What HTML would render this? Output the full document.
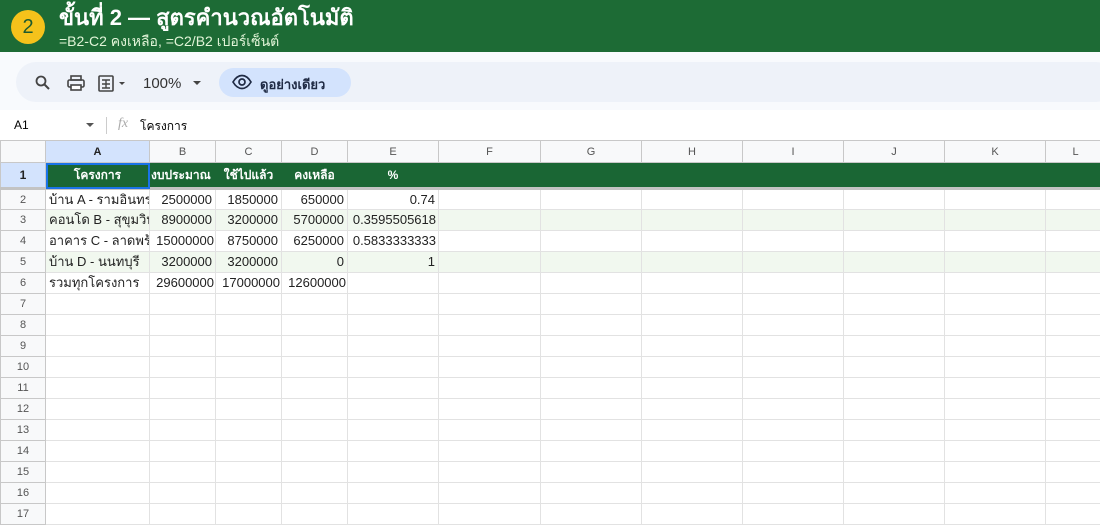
<!DOCTYPE html>
<html><head><meta charset="utf-8"><style>
*{margin:0;padding:0;box-sizing:border-box}
body{width:1100px;height:522px;overflow:hidden;background:#fff;font-family:"Liberation Sans","Noto Sans CJK SC",sans-serif;position:relative}
.ban{position:absolute;left:0;top:0;width:1100px;height:52px;background:#1d6b35}
.badge{position:absolute;left:11px;top:10px;width:34px;height:34px;border-radius:50%;background:#f5c21b;color:#1d5a2e;font-size:20px;text-align:center;line-height:34px}
.t1{position:absolute;left:59px;top:5px;color:#fff;font-size:22px;line-height:26px;font-weight:bold;white-space:nowrap}
.t2{position:absolute;left:59px;top:33px;color:#e2f5d8;font-size:14px;white-space:nowrap;line-height:16px}
.tb{position:absolute;left:0;top:52px;width:1100px;height:58px;background:#f8fafd}
.pill{position:absolute;left:16px;top:62px;width:1100px;height:40px;border-radius:20px;background:#eef2f9}
.fb{position:absolute;left:0;top:110px;width:1100px;height:30px;background:#fff;font-size:12px}
table{position:absolute;left:0;top:140px;border-collapse:collapse;table-layout:fixed;width:1105px}
td{border:1px solid #e2e2e2;height:21px;font-size:13px;padding:0 3px;white-space:nowrap;overflow:hidden;color:#222;line-height:18px}
td.h{background:#f8f9fa;color:#555;font-size:11px;text-align:center;border-color:#c8c8c8;padding:0}
tr.ch td{height:22px}
tr.r1 td{background:#1a6634;color:#fff;font-weight:bold;text-align:center;font-size:12px;height:26px;border-color:#1a6634;border-bottom:3px solid #c3c3c3}
tr.r1 td.h{background:#d3e3fd;color:#222;border-color:#c8c8c8;border-bottom:3px solid #c3c3c3;font-weight:bold}
tr.s td{background:#f1f8ef}
tr.s td.h{background:#f8f9fa}
.n{text-align:right}
</style></head><body>
<div class="ban"><div class="badge">2</div>
<div class="t1">ขั้นที่ 2 — สูตรคำนวณอัตโนมัติ</div>
<div class="t2">=B2-C2 คงเหลือ, =C2/B2 เปอร์เซ็นต์</div></div>
<div class="tb"></div><div class="pill"></div>
<svg style="position:absolute;left:35px;top:75px" width="16" height="16" viewBox="0 0 16 16"><circle cx="6" cy="6" r="4.5" fill="none" stroke="#444" stroke-width="1.8"/><path d="M9.5 9.5L14 14" stroke="#444" stroke-width="2"/></svg>
<svg style="position:absolute;left:67px;top:75px" width="18" height="16" viewBox="0 0 18 16"><rect x="4" y="1" width="10" height="4" fill="none" stroke="#444" stroke-width="1.6"/><rect x="1" y="5" width="16" height="7" rx="1.5" fill="none" stroke="#444" stroke-width="1.6"/><rect x="4" y="10" width="10" height="5" fill="#fff" stroke="#444" stroke-width="1.6"/></svg>
<svg style="position:absolute;left:98px;top:74px" width="32" height="18" viewBox="0 0 32 18"><rect x="1" y="2" width="14" height="15" rx="1" fill="none" stroke="#444" stroke-width="1.6"/><path d="M4 6h8M4 10h8M4 14h8M8 6v8" stroke="#444" stroke-width="1.4"/><path d="M21 8l3 3 3-3z" fill="#444"/></svg>
<div style="position:absolute;left:143px;top:75px;font-size:15px;color:#333">100%</div>
<svg style="position:absolute;left:192px;top:80px" width="10" height="6"><path d="M1 1l4 4 4-4z" fill="#444"/></svg>
<div style="position:absolute;left:219px;top:68px;width:132px;height:29px;border-radius:15px;background:#d3e3fd"></div>
<svg style="position:absolute;left:232px;top:74px" width="20" height="16" viewBox="0 0 20 16"><path d="M1 8C4 3 7 1.5 10 1.5S16 3 19 8c-3 5-6 6.5-9 6.5S4 13 1 8z" fill="none" stroke="#1f2a44" stroke-width="1.7"/><circle cx="10" cy="8" r="3" fill="none" stroke="#1f2a44" stroke-width="1.7"/></svg>
<div style="position:absolute;left:260px;top:74px;font-size:13px;font-weight:bold;color:#1f2a44">ดูอย่างเดียว</div>
<div class="fb"><span style="position:absolute;left:14px;top:8px">A1</span>
<svg style="position:absolute;left:86px;top:13px" width="8" height="5"><path d="M0 0l4 4 4-4z" fill="#555"/></svg>
<div style="position:absolute;left:106px;top:7px;width:1px;height:17px;background:#ccc"></div>
<span style="position:absolute;left:118px;top:6px;color:#aaa;font-style:italic;font-family:'Liberation Serif',serif;font-size:14px">fx</span>
<span style="position:absolute;left:140px;top:7px">โครงการ</span></div>
<table>
<colgroup><col style="width:45px"><col style="width:104px"><col style="width:66px"><col style="width:66px"><col style="width:66px"><col style="width:91px"><col style="width:102px"><col style="width:101px"><col style="width:101px"><col style="width:101px"><col style="width:101px"><col style="width:101px"><col style="width:60px"></colgroup>
<tr class="ch"><td class="h"></td><td class="h" style="background:#d3e3fd;font-weight:bold;color:#222">A</td><td class="h">B</td><td class="h">C</td><td class="h">D</td><td class="h">E</td><td class="h">F</td><td class="h">G</td><td class="h">H</td><td class="h">I</td><td class="h">J</td><td class="h">K</td><td class="h">L</td></tr>
<tr class="r1"><td class="h">1</td><td style="outline:2px solid #1a73e8;outline-offset:-2px">โครงการ</td><td style="text-align:left;padding:0 1px">งบประมาณ</td><td>ใช้ไปแล้ว</td><td>คงเหลือ</td><td>%</td><td></td><td></td><td></td><td></td><td></td><td></td><td></td></tr>
<tr><td class="h">2</td><td>บ้าน A - รามอินทรา</td><td class="n">2500000</td><td class="n">1850000</td><td class="n">650000</td><td class="n">0.74</td><td></td><td></td><td></td><td></td><td></td><td></td><td></td></tr>
<tr class="s"><td class="h">3</td><td>คอนโด B - สุขุมวิท</td><td class="n">8900000</td><td class="n">3200000</td><td class="n">5700000</td><td class="n" style="padding:0 2px">0.3595505618</td><td></td><td></td><td></td><td></td><td></td><td></td><td></td></tr>
<tr><td class="h">4</td><td>อาคาร C - ลาดพร้าว</td><td class="n" style="padding:0 1px">15000000</td><td class="n">8750000</td><td class="n">6250000</td><td class="n" style="padding:0 2px">0.5833333333</td><td></td><td></td><td></td><td></td><td></td><td></td><td></td></tr>
<tr class="s"><td class="h">5</td><td>บ้าน D - นนทบุรี</td><td class="n">3200000</td><td class="n">3200000</td><td class="n">0</td><td class="n">1</td><td></td><td></td><td></td><td></td><td></td><td></td><td></td></tr>
<tr><td class="h">6</td><td>รวมทุกโครงการ</td><td class="n" style="padding:0 1px">29600000</td><td class="n" style="padding:0 1px">17000000</td><td class="n" style="padding:0 1px">12600000</td><td></td><td></td><td></td><td></td><td></td><td></td><td></td><td></td></tr>
<tr><td class="h">7</td><td></td><td></td><td></td><td></td><td></td><td></td><td></td><td></td><td></td><td></td><td></td><td></td></tr>
<tr><td class="h">8</td><td></td><td></td><td></td><td></td><td></td><td></td><td></td><td></td><td></td><td></td><td></td><td></td></tr>
<tr><td class="h">9</td><td></td><td></td><td></td><td></td><td></td><td></td><td></td><td></td><td></td><td></td><td></td><td></td></tr>
<tr><td class="h">10</td><td></td><td></td><td></td><td></td><td></td><td></td><td></td><td></td><td></td><td></td><td></td><td></td></tr>
<tr><td class="h">11</td><td></td><td></td><td></td><td></td><td></td><td></td><td></td><td></td><td></td><td></td><td></td><td></td></tr>
<tr><td class="h">12</td><td></td><td></td><td></td><td></td><td></td><td></td><td></td><td></td><td></td><td></td><td></td><td></td></tr>
<tr><td class="h">13</td><td></td><td></td><td></td><td></td><td></td><td></td><td></td><td></td><td></td><td></td><td></td><td></td></tr>
<tr><td class="h">14</td><td></td><td></td><td></td><td></td><td></td><td></td><td></td><td></td><td></td><td></td><td></td><td></td></tr>
<tr><td class="h">15</td><td></td><td></td><td></td><td></td><td></td><td></td><td></td><td></td><td></td><td></td><td></td><td></td></tr>
<tr><td class="h">16</td><td></td><td></td><td></td><td></td><td></td><td></td><td></td><td></td><td></td><td></td><td></td><td></td></tr>
<tr><td class="h">17</td><td></td><td></td><td></td><td></td><td></td><td></td><td></td><td></td><td></td><td></td><td></td><td></td></tr>
</table>
</body></html>
